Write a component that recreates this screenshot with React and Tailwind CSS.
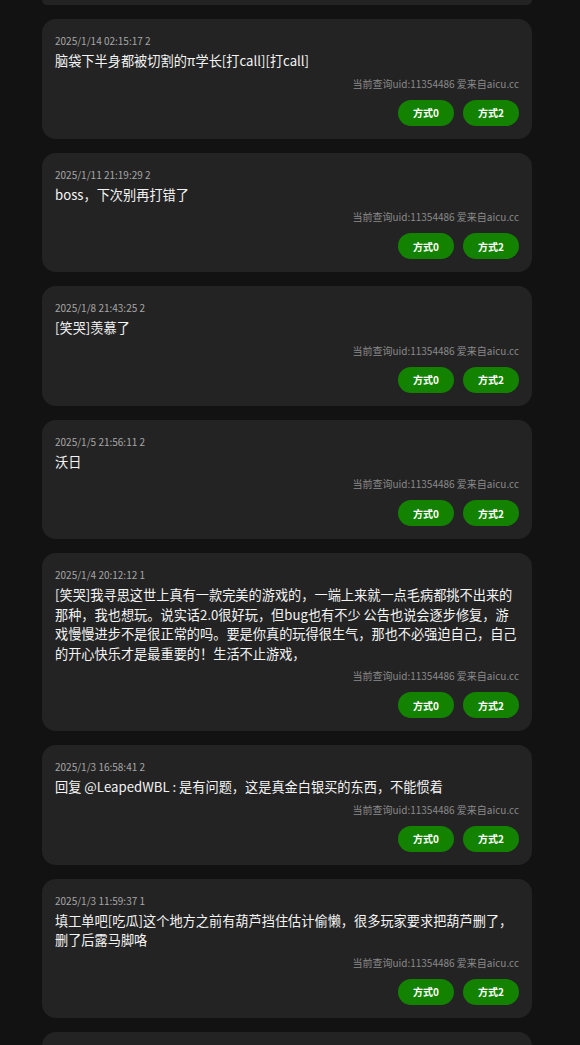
const UID_TEXT = '当前查询uid:11354486 爱来自aicu.cc'

const comments = [
    { id: 1, time: '2025/1/14 02:15:17 2', content: '脑袋下半身都被切割的π学长[打call][打call]' },
    { id: 2, time: '2025/1/11 21:19:29 2', content: 'boss，下次别再打错了' },
    { id: 3, time: '2025/1/8 21:43:25 2', content: '[笑哭]羡慕了' },
    { id: 4, time: '2025/1/5 21:56:11 2', content: '沃日' },
    {
        id: 5,
        time: '2025/1/4 20:12:12 1',
        content:
            '[笑哭]我寻思这世上真有一款完美的游戏的，一端上来就一点毛病都挑不出来的那种，我也想玩。说实话2.0很好玩，但bug也有不少 公告也说会逐步修复，游戏慢慢进步不是很正常的吗。要是你真的玩得很生气，那也不必强迫自己，自己的开心快乐才是最重要的！生活不止游戏，',
    },
    { id: 6, time: '2025/1/3 16:58:41 2', content: '回复 @LeapedWBL : 是有问题，这是真金白银买的东西，不能惯着' },
    {
        id: 7,
        time: '2025/1/3 11:59:37 1',
        content: '填工单吧[吃瓜]这个地方之前有葫芦挡住估计偷懒，很多玩家要求把葫芦删了，删了后露马脚咯',
    },
    { id: 8, time: '2025/1/2 19:40:02 2', content: '……' },
]

const CommentCard = ({ comment }) => (
    <div className="bg-[#232323] rounded-[14px] px-[13px] pt-[13px] pb-[13px] flex flex-col">
        <span className="text-[10px] leading-[17px] text-[#a6a6a6]">{comment.time}</span>
        <p className="mt-[2px] text-[13.2px] leading-[19.5px] text-[#f4f4f4] break-words">{comment.content}</p>
        <span className="mt-[5px] self-end text-[10px] leading-[16px] text-[#8a8a8a]">{UID_TEXT}</span>
        <div className="mt-[8px] flex justify-end gap-[9px]">
            <button
                type="button"
                className="w-[56px] h-[26px] rounded-full bg-[#138200] text-white text-[10px] font-bold flex items-center justify-center"
            >
                方式0
            </button>
            <button
                type="button"
                className="w-[56px] h-[26px] rounded-full bg-[#138200] text-white text-[10px] font-bold flex items-center justify-center"
            >
                方式2
            </button>
        </div>
    </div>
)

export default function App() {
    return (
        <div
            className="h-screen bg-[#121212] overflow-hidden"
            style={{ fontFamily: '"Noto Sans CJK SC", "Noto Sans", sans-serif' }}
        >
            <div className="w-[490px] ml-[42px] flex flex-col gap-[14px]">
                <div className="h-[5px] bg-[#232323] rounded-b-[14px]" />
                {comments.map((comment) => (
                    <CommentCard key={comment.id} comment={comment} />
                ))}
            </div>
        </div>
    )
}
